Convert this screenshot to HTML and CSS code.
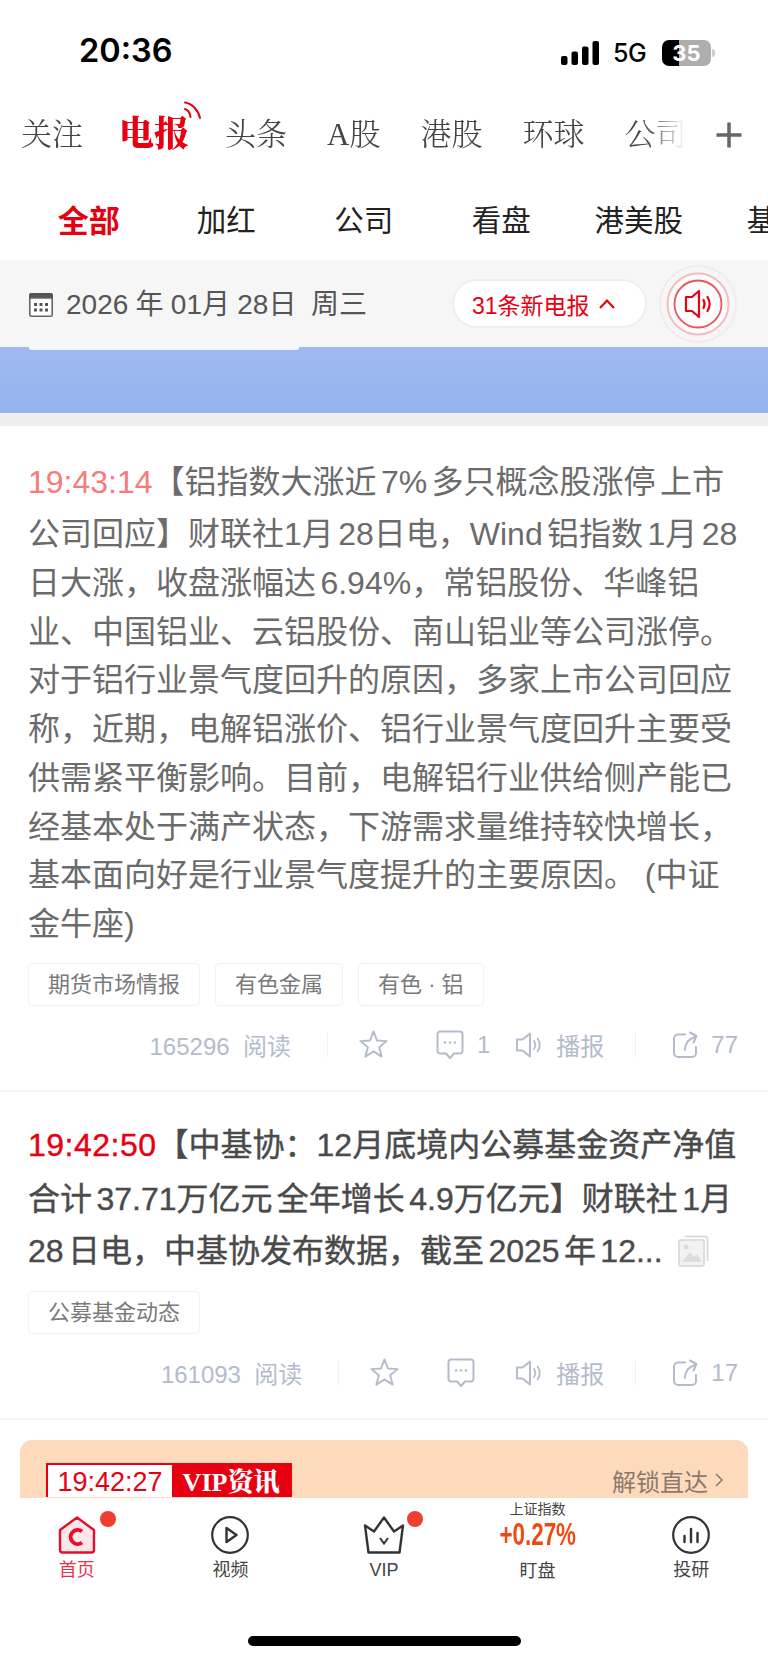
FILE: index.html
```html
<!DOCTYPE html>
<html lang="zh-CN">
<head>
  <meta charset="UTF-8" />
  <meta name="viewport" content="width=device-width, initial-scale=1.0"/>
  <title>电报</title>
  <link rel="stylesheet" href="styles.css">
</head>
<body>

<svg class="defs" width="0" height="0">
  <symbol id="i-star" viewBox="0 0 32 32">
    <path d="M16 2.500l3.600 9.400 10 .6-7.800 6.300 2.600 9.700L16 23.100l-8.400 5.400 2.600-9.700-7.800-6.300 10-.6z" fill="none" stroke="currentColor" stroke-width="2" stroke-linejoin="round"/>
  </symbol>
  <symbol id="i-comment" viewBox="0 0 28 30">
    <path d="M4 1.500h20a2.500 2.500 0 0 1 2.500 2.500v17a2.500 2.500 0 0 1-2.500 2.500h-6l-4 4.500-4-4.500H4A2.500 2.500 0 0 1 1.500 21V4A2.500 2.500 0 0 1 4 1.500z" fill="none" stroke="currentColor" stroke-width="2" stroke-linejoin="round"/>
    <circle cx="9" cy="12.500" r="1.300" fill="currentColor"/>
    <circle cx="14" cy="12.500" r="1.300" fill="currentColor"/>
    <circle cx="19" cy="12.500" r="1.300" fill="currentColor"/>
  </symbol>
  <symbol id="i-speaker" viewBox="0 0 28 28">
    <path d="M2 8.500h5.500L15 2.500v23l-7.500-6H2z" fill="none" stroke="currentColor" stroke-width="2" stroke-linejoin="round"/>
    <path d="M19 10c1.600 2.400 1.600 5.600 0 8M22.500 7.500c2.800 4 2.800 9 0 13" fill="none" stroke="currentColor" stroke-width="1.800" stroke-linecap="round"/>
  </symbol>
  <symbol id="i-share" viewBox="0 0 28 28">
    <path d="M13 3.500H6a4 4 0 0 0-4 4V22a4 4 0 0 0 4 4h14a4 4 0 0 0 4-4v-6" fill="none" stroke="currentColor" stroke-width="2" stroke-linecap="round"/>
    <path d="M13 19c0-6 3-11 10-13M18 1.500l6.500 3.500-3 6.500" fill="none" stroke="currentColor" stroke-width="2" stroke-linecap="round" stroke-linejoin="round"/>
  </symbol>
</svg>

<div class="page">

  <!-- status bar -->
  <div class="status">
    <span class="clock">20:36</span>
    <div class="status-right">
      <svg class="signal" width="38" height="24" viewBox="0 0 38 24">
        <rect x="0" y="15" width="6.500" height="9" rx="2"/>
        <rect x="10.500" y="10.500" width="6.500" height="13.500" rx="2"/>
        <rect x="21" y="5.500" width="6.500" height="18.500" rx="2"/>
        <rect x="31.500" y="0" width="6.500" height="24" rx="2"/>
      </svg>
      <span class="net">5G</span>
      <div class="battery"><span class="battery-num">35</span></div>
      <span class="battery-nub"></span>
    </div>
  </div>

  <!-- channels -->
  <div class="channels">
    <div class="channel-list">
      <span class="channel">关注</span>
      <span class="channel channel-live">电报
        <svg class="waves" width="18" height="19" viewBox="0 0 18 19">
          <path d="M1 8c3 1 5 4 5.500 8M1 1.500c7 1 13 7 15 15.500" fill="none" stroke="#e60012" stroke-width="2" stroke-linecap="round"/>
        </svg>
      </span>
      <span class="channel">头条</span>
      <span class="channel">A股</span>
      <span class="channel">港股</span>
      <span class="channel">环球</span>
      <span class="channel">公司</span>
    </div>
    <svg class="plus" width="28" height="28" viewBox="0 0 28 28">
      <path d="M14 1.500v25M1.500 14h25" stroke="#666" stroke-width="3.500"/>
    </svg>
  </div>

  <!-- sub filters -->
  <div class="filters">
    <span class="filter filter-on">全部</span>
    <span class="filter">加红</span>
    <span class="filter">公司</span>
    <span class="filter">看盘</span>
    <span class="filter">港美股</span>
    <span class="filter">基金</span>
  </div>

  <!-- date bar -->
  <div class="datebar">
    <svg class="cal" width="24" height="24" viewBox="0 0 24 24">
      <path d="M2 0h20a2 2 0 0 1 2 2v5H0V2a2 2 0 0 1 2-2z" fill="#555"/>
      <rect x="0.800" y="5" width="22.400" height="18.200" rx="1.500" fill="#fff" stroke="#666" stroke-width="1.600"/>
      <g fill="#555">
        <rect x="5" y="10" width="3" height="3"/><rect x="10.500" y="10" width="3" height="3"/><rect x="16" y="10" width="3" height="3"/>
        <rect x="5" y="15.500" width="3" height="3"/><rect x="10.500" y="15.500" width="3" height="3"/><rect x="16" y="15.500" width="3" height="3"/>
      </g>
    </svg>
    <span class="date">2026 年 01月 28日&nbsp; 周三</span>
    <div class="pill">31条新电报
      <svg width="18" height="12" viewBox="0 0 18 12"><path d="M2 10l7-7.500 7 7.500" fill="none" stroke="#e60012" stroke-width="2.200"/></svg>
    </div>
    <svg class="sound" width="80" height="80" viewBox="0 0 80 80">
      <circle cx="40" cy="40" r="38" fill="none" stroke="#e60012" stroke-opacity=".06" stroke-width="1.500"/>
      <circle cx="40" cy="40" r="30.500" fill="#fff" fill-opacity=".5" stroke="#e60012" stroke-opacity=".24" stroke-width="2"/>
      <circle cx="40" cy="40" r="23.500" fill="#fff" stroke="#e9555f" stroke-width="1.800"/>
      <path d="M28 33h6l7-6v26l-7-6h-6z" fill="none" stroke="#e60012" stroke-width="2.200" stroke-linejoin="round"/>
      <path d="M45.500 36c1.400 2.600 1.400 5.400 0 8M49.500 33c2.800 4.600 2.800 9.400 0 14" fill="none" stroke="#e60012" stroke-width="2.200" stroke-linecap="round"/>
    </svg>
  </div>

  <!-- banner, scrolled almost out of view -->
  <div class="banner"><div class="banner-card"></div></div>

  <div class="feed">

    <div class="item">
      <p class="body"><span class="time time-read">19:43:14</span>【铝指数大涨近 7% 多只概念股涨停 上市<br>公司回应】财联社1月 28日电，Wind 铝指数 1月 28<br>日大涨，收盘涨幅达 6.94%，常铝股份、华峰铝<br>业、中国铝业、云铝股份、南山铝业等公司涨停。<br>对于铝行业景气度回升的原因，多家上市公司回应<br>称，近期，电解铝涨价、铝行业景气度回升主要受<br>供需紧平衡影响。目前，电解铝行业供给侧产能已<br>经基本处于满产状态，下游需求量维持较快增长，<br>基本面向好是行业景气度提升的主要原因。&nbsp; (中证<br>金牛座)</p>
      <div class="chips">
        <span class="chip">期货市场情报</span>
        <span class="chip">有色金属</span>
        <span class="chip">有色 · 铝</span>
      </div>
      <div class="meta">
        <span class="reads">165296&nbsp; 阅读</span>
        <span class="sep"></span>
        <svg class="ic ic-star"><use href="#i-star"/></svg>
        <svg class="ic ic-comment"><use href="#i-comment"/></svg>
        <span class="count">1</span>
        <svg class="ic ic-speaker"><use href="#i-speaker"/></svg>
        <span class="play">播报</span>
        <span class="sep sep-right"></span>
        <svg class="ic ic-share"><use href="#i-share"/></svg>
        <span class="count">77</span>
      </div>
    </div>

    <div class="item">
      <p class="body body-new"><span class="time">19:42:50</span>【中基协：12月底境内公募基金资产净值<br>合计 37.71万亿元 全年增长 4.9万亿元】财联社 1月<br>28 日电，中基协发布数据，截至 2025 年 12...
        <svg class="pics" width="31" height="32" viewBox="0 0 31 32">
          <path d="M7 1.500h20a2.500 2.500 0 0 1 2.500 2.500v22" fill="none" stroke="#ddd" stroke-width="2"/>
          <rect x="1" y="5" width="25" height="26" rx="2" fill="#f3f1f1" stroke="#ddd" stroke-width="2"/>
          <circle cx="8" cy="12" r="2.500" fill="#ddd"/>
          <path d="M4 27l8-10 4 5 3-3 5 8z" fill="#ddd"/>
        </svg>
      </p>
      <div class="chips">
        <span class="chip">公募基金动态</span>
      </div>
      <div class="meta">
        <span class="reads">161093&nbsp; 阅读</span>
        <span class="sep"></span>
        <svg class="ic ic-star"><use href="#i-star"/></svg>
        <svg class="ic ic-comment"><use href="#i-comment"/></svg>
        <span class="count count-empty"></span>
        <svg class="ic ic-speaker"><use href="#i-speaker"/></svg>
        <span class="play">播报</span>
        <span class="sep sep-right"></span>
        <svg class="ic ic-share"><use href="#i-share"/></svg>
        <span class="count">17</span>
      </div>
    </div>

    <div class="vip">
      <div class="vip-tag">
        <span class="vip-time">19:42:27</span>
        <span class="vip-label">VIP资讯</span>
      </div>
      <span class="vip-unlock">解锁直达 <svg width="9" height="14" viewBox="0 0 9 14"><path d="M1 1l6 6-6 6" fill="none" stroke="#8a7a6e" stroke-width="1.500"/></svg></span>
    </div>
  </div>

  <!-- bottom nav -->
  <div class="tabbar">
    <div class="tab tab-on">
      <div class="tab-icon">
        <svg width="38" height="38" viewBox="0 0 38 38">
          <path d="M19 1.500L36 14v20a2.500 2.500 0 0 1-2.500 2.500h-29A2.500 2.500 0 0 1 2 34V14z" fill="#fbe6e8" stroke="#e60f2d" stroke-width="2.400" stroke-linejoin="round"/>
          <path d="M25 15.500a7 7 0 1 0 0 11" transform="translate(-1 0)" fill="none" stroke="#e60f2d" stroke-width="4"/>
        </svg>
        <span class="dot"></span>
      </div>
      <span class="tab-name">首页</span>
    </div>
    <div class="tab">
      <div class="tab-icon">
        <svg width="38" height="38" viewBox="0 0 38 38">
          <circle cx="19" cy="19" r="17.800" fill="none" stroke="#333" stroke-width="2.200"/>
          <path d="M15.500 12l10 7-10 7z" fill="none" stroke="#333" stroke-width="2.400" stroke-linejoin="round"/>
        </svg>
      </div>
      <span class="tab-name">视频</span>
    </div>
    <div class="tab">
      <div class="tab-icon">
        <svg width="42" height="38" viewBox="0 0 42 38">
          <path d="M2 9.500l9 6L21 1.500l10 14 9-6-3.500 27h-31z" fill="none" stroke="#333" stroke-width="2.400" stroke-linejoin="round"/>
          <path d="M17 22l4 5.500 4-5.500" fill="none" stroke="#333" stroke-width="2"/>
        </svg>
        <span class="dot dot-vip"></span>
      </div>
      <span class="tab-name">VIP</span>
    </div>
    <div class="tab tab-index">
      <span class="index-name">上证指数</span>
      <span class="index-val">+0.27%</span>
      <span class="tab-name">盯盘</span>
    </div>
    <div class="tab">
      <div class="tab-icon">
        <svg width="38" height="38" viewBox="0 0 38 38">
          <circle cx="19" cy="19" r="17.800" fill="none" stroke="#333" stroke-width="2.200"/>
          <path d="M12.500 20v6M19 13v13M25.500 17v9" fill="none" stroke="#333" stroke-width="2.400" stroke-linecap="round"/>
        </svg>
      </div>
      <span class="tab-name">投研</span>
    </div>
    <div class="home-bar"></div>
  </div>

</div>

</body>
</html>
```

FILE: styles.css
```css
* { box-sizing: border-box; }
body { margin: 0; background: #fff; font-family: "Liberation Sans", "Noto Sans CJK SC", sans-serif; }
.defs { position: absolute; }
.page { width: 768px; height: 1663px; display: flex; flex-direction: column; overflow: hidden; }

/* status bar */
.status { height: 100px; flex: none; padding: 33px 53px 0 79px; display: flex; justify-content: space-between; align-items: flex-start; }
.clock { font-family: Inter, sans-serif; font-weight: 600; font-size: 32.500px; line-height: 36px; color: #000; }
.status-right { display: flex; align-items: center; margin-top: 5px; }
.signal { fill: #000; }
.net { font-family: Inter, sans-serif; font-weight: 500; font-size: 25px; margin: 0 14px; width: 35px; letter-spacing: -.5px; }
.battery { width: 49px; height: 26px; border-radius: 7px; background: linear-gradient(90deg, #000 35%, #aeaeae 35%); color: #fff; text-align: center; }
.battery-num { font-family: Inter, sans-serif; font-weight: 700; font-size: 22px; line-height: 26px; display: block; }
.battery-nub { width: 3px; height: 8px; background: #ccc; border-radius: 0 3px 3px 0; margin-left: 1px; }

/* channels */
.channels { height: 72px; flex: none; padding-left: 21px; display: flex; align-items: center; position: relative; }
.channel-list { width: 664px; display: flex; gap: 40px; overflow: hidden; padding: 6px 0 8px; -webkit-mask-image: linear-gradient(90deg, #000 94%, transparent 100%); mask-image: linear-gradient(90deg, #000 94%, transparent 100%); }
.channel { font-family: "Liberation Serif", "Noto Serif CJK SC", "Noto Sans CJK SC", serif; font-size: 31px; line-height: 60px; color: #444; white-space: nowrap; flex: none; font-weight: 300; }
.channel-live { position: relative; font-size: 35px; font-weight: 900; color: #e60012; margin: 0 -4px 0 -4px; }
.waves { position: absolute; right: -13px; top: -4px; }
.plus { margin: -2px 0 0 30px; flex: none; }

/* filters */
.filters { height: 92px; flex: none; display: flex; padding-left: 20px; align-items: center; overflow: hidden; margin-bottom: -4px; }
.filter { flex: 0 0 137.500px; text-align: center; font-size: 29.500px; color: #222; white-space: nowrap; }
.filter-on { color: #e60012; font-weight: 700; font-size: 31px; }

/* date bar */
.datebar { height: 87px; flex: none; background: #f6f6f6; display: flex; align-items: center; padding-left: 29px; position: relative; z-index: 1; }
.cal { flex: none; margin-top: 2px; }
.date { font-size: 28px; color: #555; margin: -4px 0 0 13px; width: 386px; white-space: nowrap; word-spacing: -.5px; }
.pill { width: 195px; height: 49px; background: #fff; border: 2px solid #eee; border-radius: 25px; color: #e60012; font-size: 23px; display: flex; align-items: center; gap: 8px; padding-left: 18px; }
.sound { flex: none; margin-left: 11px; }

.banner { height: 66px; flex: none; background: linear-gradient(#a0baf1, #94b3ee); }
.banner-card { width: 270px; height: 3px; margin-left: 29px; background: #f7f8fd; border-radius: 0 0 12px 12px; }

/* feed */
.feed { flex: 1; min-height: 0; overflow: hidden; border-top: 13px solid #eee; padding-top: 3px; }
.item { padding: 26px 20px 0 28px; border-bottom: 2px solid #f4f5f9; }
.body { margin: 0; font-size: 32px; line-height: 48.700px; color: #6b6b6b; white-space: nowrap; word-spacing: -4.500px; }
.body-new { color: #4a4a4a; -webkit-text-stroke: .4px #4a4a4a; line-height: 52px; }
.time { font-size: 32px; color: #e60012; line-height: 55.300px; display: inline-block; }
.body-new .time { -webkit-text-stroke: .4px #e60012; letter-spacing: .5px; }
.time-read { color: #f87a7a; }
.pics { vertical-align: -5px; margin-left: 11px; }

.chips { display: flex; gap: 15px; margin-top: 14px; }
.chip { height: 43px; padding: 0 19px; border: 1px solid #f2f2f2; border-radius: 4px; font-size: 22px; line-height: 41px; color: #7a7a7a; white-space: nowrap; }

.meta { height: 84px; display: flex; justify-content: flex-end; align-items: center; padding: 0 10px 6px 0; color: #b4bccb; font-size: 24px; white-space: nowrap; }
.sep { width: 1px; height: 24px; background: #eef0f4; margin: 0 30px 0 36px; }
.sep-right { margin: 0 36px 0 31px; }
.ic { color: #b4bccb; flex: none; }
.ic-star { width: 31px; height: 31px; }
.ic-comment { width: 28px; height: 30px; margin: 0 13px 0 47px; }
.ic-speaker { width: 28px; height: 28px; margin: 0 13px 0 25px; }
.ic-share { width: 28px; height: 28px; margin-right: 11px; }
.count-empty { width: 2px; }

/* vip row */
.vip { margin: 20px 20px 0; height: 100px; background: #fedabd; border-radius: 12px 12px 0 0; padding: 23px 24px 0 26px; display: flex; justify-content: space-between; align-items: flex-start; }
.vip-tag { display: flex; height: 34px; border: 2px solid #e60012; border-bottom: 0; }
.vip-time { width: 124px; background: #fff; color: #e60012; font-size: 27px; line-height: 34px; text-align: center; }
.vip-label { width: 118px; background: #e60012; color: #fff; font-family: "Liberation Serif", "Noto Serif CJK SC", "Noto Sans CJK SC", serif; font-weight: 900; font-size: 26px; line-height: 36px; text-align: center; }
.vip-unlock { font-size: 24px; color: #8a7a6e; display: flex; align-items: center; gap: 7px; }

/* bottom nav */
.tabbar { height: 165px; flex: none; background: #fff; display: flex; position: relative; padding-top: 17px; }
.tab { flex: 1; display: flex; flex-direction: column; align-items: center; }
.tab-icon { height: 39px; display: flex; align-items: center; position: relative; }
.tab-name { font-size: 18px; line-height: 24px; color: #444; margin-top: 4px; }
.tab-on .tab-name { color: #e6324b; }
.dot { position: absolute; right: -20px; top: -4px; width: 16px; height: 16px; border-radius: 50%; background: #ee3f2e; }
.dot-vip { right: -18px; }
.tab-index { margin-top: -17px; padding-top: 1px; }
.index-name { font-size: 14px; line-height: 20px; color: #444; }
.index-val { font-weight: 700; font-size: 32px; line-height: 30px; color: #f04a14; transform: scaleX(.7); }
.tab-index .tab-name { margin-top: 10px; }
.home-bar { position: absolute; left: 248px; bottom: 17px; width: 273px; height: 10px; background: #000; border-radius: 5px; }
```
